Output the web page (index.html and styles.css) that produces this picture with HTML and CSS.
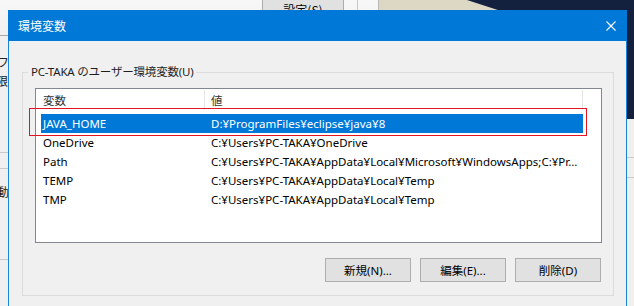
FILE: index.html
```html
<!DOCTYPE html>
<html lang="ja">
<head>
<meta charset="utf-8">
<title>環境変数</title>
<link rel="stylesheet" href="styles.css">
</head>
<body>
<div class="desktop">
  <div class="wall">
    <div class="wedge"></div>
  </div>
  <div class="bgwin">
    <div class="bg-btn">設定(S)</div>
    <div class="bg-vline v1"></div>
    <div class="bg-vline v2"></div>
    <div class="bg-hline h0"></div>
    <div class="bg-hline h1"></div>
    <div class="bg-hline h2"></div>
    <div class="bg-hline h3"></div>
    <span class="bg-char c2">フ</span>
    <span class="bg-char c3">限</span>
    <span class="bg-char c4">動</span>
  </div>
  <div class="bgwin-right">
    <div class="bg-hline r1"></div>
    <div class="bg-hline r2"></div>
  </div>

  <div class="dialog">
    <div class="titlebar">
      <span class="title">環境変数</span>
      <svg class="close" width="10" height="10" viewBox="0 0 10 10"><path d="M0.5 0.5 L9.5 9.5 M9.5 0.5 L0.5 9.5" stroke="#ffffff" stroke-width="1.1" fill="none"/></svg>
    </div>
    <div class="body">
      <fieldset class="group">
        <legend class="group-label">PC-TAKA のユーザー環境変数(U)</legend>
        <div class="list">
          <div class="list-head">
            <div class="head-cell first">変数</div>
            <div class="head-cell">値</div>
          </div>
          <div class="row selected"><span>JAVA_HOME</span><span>D:¥ProgramFiles¥eclipse¥java¥8</span></div>
          <div class="row"><span>OneDrive</span><span>C:¥Users¥PC-TAKA¥OneDrive</span></div>
          <div class="row"><span>Path</span><span>C:¥Users¥PC-TAKA¥AppData¥Local¥Microsoft¥WindowsApps;C:¥Pr...</span></div>
          <div class="row"><span>TEMP</span><span>C:¥Users¥PC-TAKA¥AppData¥Local¥Temp</span></div>
          <div class="row"><span>TMP</span><span>C:¥Users¥PC-TAKA¥AppData¥Local¥Temp</span></div>
        </div>
        <div class="buttons">
          <button class="btn">新規(N)...</button>
          <button class="btn">編集(E)...</button>
          <button class="btn">削除(D)</button>
        </div>
      </fieldset>
    </div>
  </div>

  <div class="annot"></div>
</div>
</body>
</html>
```

FILE: styles.css
```css
* { box-sizing: border-box; }
html, body { margin: 0; padding: 0; }
body {
  background: #f0f0f0;
  font-family: "Noto Sans", "Noto Sans CJK JP", sans-serif;
  font-size: 11.5px;
  color: #000;
}
.desktop {
  position: relative;
  width: 634px;
  height: 306px;
  overflow: hidden;
  background: #f0f0f0;
}

/* wallpaper top-right */
.wall {
  position: absolute;
  left: 379px;
  top: 0;
  width: 255px;
  height: 119px;
  background: #13213f;
}
.wedge {
  position: absolute;
  left: 0;
  top: 0;
  width: 125px;
  height: 12px;
  background: #dcd8c4;
  clip-path: polygon(0 0, 88px 0, 125px 12px, 0 12px);
}

/* background window (left/top) */
.bgwin {
  position: absolute;
  left: 0;
  top: 0;
  width: 379px;
  height: 306px;
  background: linear-gradient(#f7f7f7, #f0f0f0 40px);
}
.bg-btn {
  position: absolute;
  left: 262px;
  top: -3px;
  width: 82px;
  height: 26px;
  background: #e1e1e1;
  border: 1px solid #adadad;
  text-align: center;
  line-height: 24px;
  font-family: "Noto Sans CJK JP", sans-serif;
  font-size: 12px;
}
.bg-vline {
  position: absolute;
  top: 0;
  width: 1px;
  height: 20px;
  background: #c8c8c8;
}
.v1 { left: 357px; }
.v2 { left: 378px; background: #b9b9b9; }
.bg-hline {
  position: absolute;
  left: 0;
  width: 12px;
  height: 1px;
  background: #c9c9c9;
}
.h0 { top: 35px; background: #a8a8a8; }
.h1 { top: 152px; }
.h2 { top: 168px; }
.h3 { top: 259px; }
.bg-char {
  position: absolute;
  font-family: "Noto Sans CJK JP", sans-serif;
  font-size: 12px;
  line-height: 14px;
  color: #222;
}
.c2 { left: -3px; top: 55px; }
.c3 { left: -4px; top: 74px; }
.c4 { left: -3px; top: 185px; }

.bgwin-right {
  position: absolute;
  left: 627px;
  top: 119px;
  width: 7px;
  height: 187px;
  background: #f0f0f0;
}
.r1 { top: 38px; left: 0; }
.r2 { top: 58px; left: 0; }

/* dialog */
.dialog {
  position: absolute;
  left: 8px;
  top: 10px;
  width: 619px;
  height: 320px;
  background: #f0f0f0;
  border: 1px solid #1883d7;
  border-top: none;
  border-bottom: none;
  display: flex;
  flex-direction: column;
}
.titlebar {
  height: 31px;
  background: #0078d7;
  display: flex;
  align-items: center;
  justify-content: space-between;
  padding: 0 11px 0 10px;
  margin: 0 -1px;
}
.title {
  color: #fff;
  font-family: "Noto Sans CJK JP", sans-serif;
  font-size: 12px;
  line-height: 16px;
}
.close { display: block; }

.body {
  padding: 23px 12px 0 13px;
}
.group {
  margin: 0;
  border: 1px solid #dcdcdc;
  padding: 0 10px 13px 12px;
  min-width: 0;
}
.group-label {
  margin-left: -7px;
  padding: 0 3px;
  font-size: 11.5px;
  line-height: 16px;
  letter-spacing: -0.2px;
  color: #1e1e1e;
}

.list {
  margin-top: 8px;
  width: 567px;
  height: 155px;
  background: #fff;
  border: 1px solid #828790;
}
.list-head {
  display: flex;
  height: 25px;
  padding-top: 1px;
}
.head-cell {
  height: 20px;
  line-height: 20px;
  padding-left: 6px;
  width: 378px;
  border-right: 1px solid #e5e5e5;
  color: #333;
  font-family: "Noto Sans CJK JP", sans-serif;
}
.head-cell.first {
  width: 169px;
  padding-left: 7px;
}
.row {
  margin-left: 5px;
  width: 542px;
  height: 19px;
  line-height: 19px;
  padding-left: 2px;
  display: grid;
  grid-template-columns: 168px 1fr;
  white-space: nowrap;
  overflow: hidden;
}
.row.selected {
  background: #0078d7;
  color: #fff;
}

.buttons {
  display: flex;
  justify-content: flex-end;
  gap: 9px;
  width: 566px;
  margin-top: 15px;
}
.btn {
  width: 86px;
  height: 24px;
  padding: 0;
  background: #e1e1e1;
  border: 1px solid #adadad;
  border-radius: 0;
  font-family: "Noto Sans", "Noto Sans CJK JP", sans-serif;
  font-size: 11.5px;
  color: #000;
}

.annot {
  position: absolute;
  left: 29px;
  top: 108px;
  width: 558px;
  height: 28px;
  border: 1px solid #e3141f;
}
```
